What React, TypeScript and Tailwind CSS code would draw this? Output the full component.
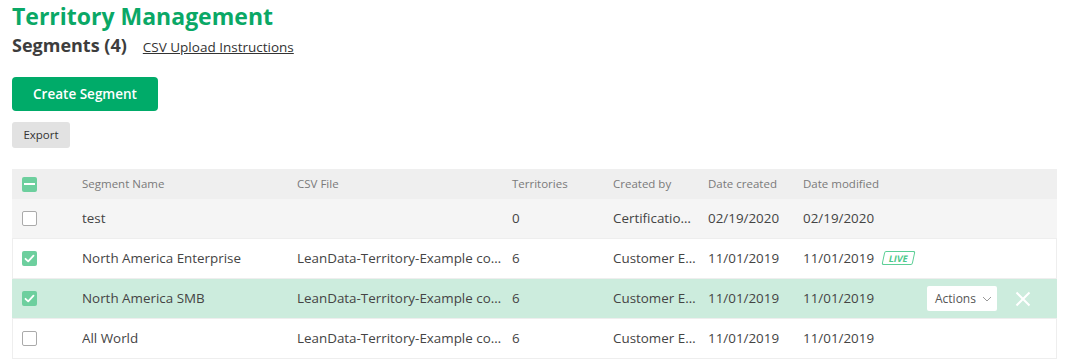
import React from "react";

interface Segment {
  name: string;
  csv: string;
  territories: number;
  createdBy: string;
  created: string;
  modified: string;
  checked: boolean;
  live?: boolean;
  selected?: boolean;
  muted?: boolean;
}

const segments: Segment[] = [
  {
    name: "test",
    csv: "",
    territories: 0,
    createdBy: "Certification User",
    created: "02/19/2020",
    modified: "02/19/2020",
    checked: false,
    muted: true,
  },
  {
    name: "North America Enterprise",
    csv: "LeanData-Territory-Example company.csv",
    territories: 6,
    createdBy: "Customer Enablement",
    created: "11/01/2019",
    modified: "11/01/2019",
    checked: true,
    live: true,
  },
  {
    name: "North America SMB",
    csv: "LeanData-Territory-Example company.csv",
    territories: 6,
    createdBy: "Customer Enablement",
    created: "11/01/2019",
    modified: "11/01/2019",
    checked: true,
    selected: true,
  },
  {
    name: "All World",
    csv: "LeanData-Territory-Example company.csv",
    territories: 6,
    createdBy: "Customer Enablement",
    created: "11/01/2019",
    modified: "11/01/2019",
    checked: false,
  },
];

const Checkbox = ({ state }: { state: "on" | "off" | "some" }) => {
  if (state === "off") {
    return (
      <span className="block w-[15px] h-[15px] rounded-[2px] border border-[#aaaaaa] bg-white" />
    );
  }
  return (
    <span className="flex w-[15px] h-[15px] rounded-[2px] bg-[#6dcf9e] items-center justify-center">
      {state === "some" ? (
        <span className="block w-[11px] h-[2px] bg-white" />
      ) : (
        <svg width="11" height="11" viewBox="0 0 11 11" fill="none">
          <path
            d="M1.5 5.8 L4.2 8.4 L9.5 2.6"
            stroke="white"
            strokeWidth="1.8"
            strokeLinecap="round"
            strokeLinejoin="round"
          />
        </svg>
      )}
    </span>
  );
};

const App = () => {
  return (
    <div
      className="w-[1065px] h-[364px] bg-white px-3 overflow-hidden text-[#444]"
      style={{ fontFamily: '"Open Sans", "Liberation Sans", sans-serif' }}
    >
      <h1 className="text-[23px] leading-[33px] font-bold text-[#0aa866]">
        Territory Management
      </h1>
      <div className="flex items-baseline gap-[16px] leading-[24px]">
        <h2 className="text-[18px] font-bold text-[#3d3d3d]">Segments (4)</h2>
        <a className="text-[13.5px] underline text-[#333] cursor-pointer">
          CSV Upload Instructions
        </a>
      </div>

      <button className="mt-[18px] block w-[146px] h-[34px] rounded-[4px] bg-[#00ab69] text-white text-[13.5px] font-semibold">
        Create Segment
      </button>
      <button className="mt-[11px] block w-[58px] h-[26px] rounded-[3px] bg-[#e2e2e2] text-[11.5px] text-[#333]">
        Export
      </button>

      <div className="mt-[21px] w-[1045px]">
        <div className="flex h-[30px] items-center bg-[#efefef] text-[11.5px] text-[#7a7a7a]">
          <div className="w-[70px] pl-[10px]">
            <Checkbox state="some" />
          </div>
          <div className="w-[215px]">Segment Name</div>
          <div className="w-[215px]">CSV File</div>
          <div className="w-[101px]">Territories</div>
          <div className="w-[95px]">Created by</div>
          <div className="w-[95px]">Date created</div>
          <div className="flex-1">Date modified</div>
        </div>

        {segments.map((s) => (
          <div
            key={s.name}
            className={`flex h-[40px] items-center text-[13.4px] border-b border-[#eeeeee] ${
              s.selected
                ? "bg-[#ccecdd]"
                : s.muted
                ? "bg-[#f5f5f5]"
                : "bg-white shadow-[inset_1px_0_0_#eeeeee,inset_-1px_0_0_#eeeeee]"
            }`}
          >
            <div className="w-[70px] pl-[10px]">
              <Checkbox state={s.checked ? "on" : "off"} />
            </div>
            <div className="w-[215px] truncate pr-[10px]">{s.name}</div>
            <div className="w-[215px] truncate pr-[10px]">{s.csv}</div>
            <div className="w-[101px]">{s.territories}</div>
            <div className="w-[95px] truncate pr-[10px]">{s.createdBy}</div>
            <div className="w-[95px]">{s.created}</div>
            <div className="flex-1 flex items-center">
              <span>{s.modified}</span>
              {s.live && (
                <span className="ml-[9px] -skew-x-12 border border-[#5ccf96] rounded-[2px] px-[5px] h-[14px] flex items-center text-[9px] font-bold text-[#4cc98a] leading-none">
                  LIVE
                </span>
              )}
              {s.selected && (
                <div className="ml-auto mr-[26px] flex items-center gap-[18px]">
                  <button className="flex items-center gap-[6px] h-[25px] w-[70px] pl-[8px] bg-white rounded-[2px] text-[12px] text-[#555]">
                    Actions
                    <svg width="10" height="6" viewBox="0 0 10 6" fill="none">
                      <path d="M1 1 L5 5 L9 1" stroke="#999" strokeWidth="1" />
                    </svg>
                  </button>
                  <svg width="16" height="16" viewBox="0 0 16 16" fill="none">
                    <path
                      d="M1.5 1.5 L14.5 14.5 M14.5 1.5 L1.5 14.5"
                      stroke="white"
                      strokeWidth="2"
                    />
                  </svg>
                </div>
              )}
            </div>
          </div>
        ))}
      </div>
    </div>
  );
};

export default App;
